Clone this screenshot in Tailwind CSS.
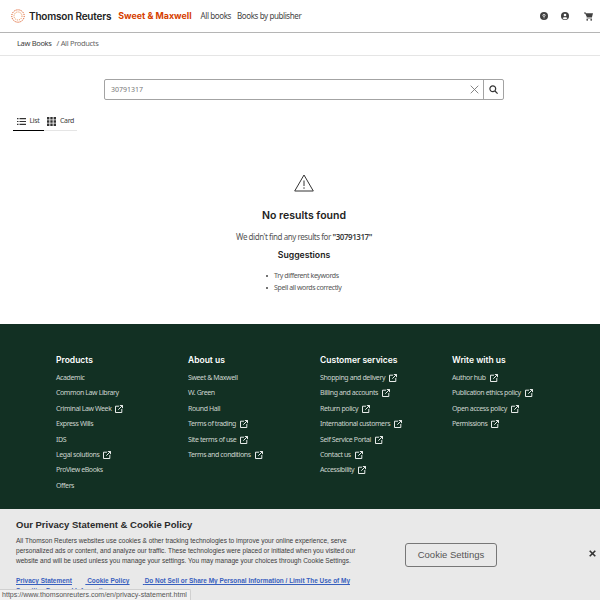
<!DOCTYPE html>
<html lang="en">
<head>
    <meta charset="UTF-8">
    <title>All Products | Sweet &amp; Maxwell</title>
    <script src="https://cdn.jsdelivr.net/npm/@tailwindcss/browser@4"></script>
</head>
<body class="relative h-[600px] w-[600px] overflow-hidden bg-white font-['Noto_Sans',sans-serif] text-[#404040]">
    <!-- Header -->
    <header class="flex h-[33px] items-center border-b border-[#b5b5b5] pl-[11px] pr-[7px]">
        <svg width="14" height="14" viewBox="0 0 14 14" fill="none" class="mr-[4px]">
            <circle cx="7" cy="7" r="6.2" stroke="#d64000" stroke-width="1" stroke-dasharray="1 1"/>
            <circle cx="7" cy="7" r="4" stroke="#e98a4a" stroke-width="1" stroke-dasharray="1 1"/>
        </svg>
        <span class="font-['Inter',sans-serif] text-[10px] font-semibold tracking-[-0.2px] text-[#222]">Thomson Reuters</span>
        <span class="ml-[7px] font-['Inter',sans-serif] text-[8.9px] font-bold text-[#d64000]">Sweet &amp; Maxwell</span>
        <a class="ml-[9px] text-[8px] tracking-[-0.4px] text-[#444]">All books</a>
        <a class="ml-[6px] text-[8px] tracking-[-0.4px] text-[#444]">Books by publisher</a>
        <div class="ml-auto flex items-center">
            <svg width="8" height="8" viewBox="0 0 8 8"><circle cx="4" cy="4" r="4" fill="#404040"/><circle cx="4" cy="3.4" r="1.1" fill="none" stroke="#fff" stroke-width=".8"/><rect x="3.6" y="5.4" width=".9" height=".9" fill="#fff"/></svg>
            <svg width="8" height="8" viewBox="0 0 8 8" class="ml-[13px]"><circle cx="4" cy="4" r="4" fill="#404040"/><circle cx="4" cy="3" r="1.3" fill="#fff"/><path d="M1.6 6.3C2.2 5 5.8 5 6.4 6.3L5 7.2H3Z" fill="#fff"/></svg>
            <svg width="9" height="9" viewBox="0 0 9 9" fill="#404040" class="ml-[15px]"><path d="M0 .5H1.8L2.1 1.3H9L8 5H2.8L1.2 1.4H0Z"/><path d="M2.6 5.5H8V6.4H2.6Z"/><circle cx="3.2" cy="7.8" r=".9"/><circle cx="7.2" cy="7.8" r=".9"/></svg>
        </div>
    </header>

    <!-- Breadcrumb -->
    <nav class="flex h-[23px] items-center border-b border-[#e5e5e5] pl-[17px] text-[7.5px] tracking-[-0.33px]">
        <a class="text-[#404040]">Law Books</a>
        <span class="ml-[5px] text-[#666]">/ All Products</span>
    </nav>

    <!-- Search -->
    <div class="ml-[104px] mt-[23px] flex h-[21px] w-[400px] rounded-[2px] border border-[#a3a3a3]">
        <div class="flex flex-1 items-center justify-between pl-[6px] pr-[4px]">
            <span class="pt-px text-[7px] text-[#777]">30791317</span>
            <svg width="9" height="9" viewBox="0 0 9 9" stroke="#777" stroke-width=".9"><path d="M.7.7 8.3 8.3M8.3.7.7 8.3"/></svg>
        </div>
        <div class="flex w-[20px] items-center justify-center border-l border-[#a3a3a3]">
            <svg width="9" height="9" viewBox="0 0 9 9" fill="none" stroke="#333" stroke-width="1.2"><circle cx="3.8" cy="3.8" r="2.9"/><path d="M6 6 8.6 8.6"/></svg>
        </div>
    </div>

    <!-- View tabs -->
    <div class="ml-[13px] mt-[11px] flex h-[20px] w-[64px] border-b border-[#e5e5e5] pt-[2px] text-[7px] tracking-[-0.3px]">
        <div class="-mb-px flex w-[31px] items-center justify-center gap-[3px] border-b-[1.5px] border-black">
            <svg width="9" height="7" viewBox="0 0 9 7" fill="#333"><path d="M0 0H1.5V1.2H0ZM2.5 0H9V1.2H2.5ZM0 2.9H1.5V4.1H0ZM2.5 2.9H9V4.1H2.5ZM0 5.8H1.5V7H0ZM2.5 5.8H9V7H2.5Z"/></svg>
            <span>List</span>
        </div>
        <div class="flex flex-1 items-center justify-center gap-[4px]">
            <svg width="9" height="9" viewBox="0 0 9 9" fill="#333"><path d="M0 0H2.4V2.4H0ZM3.3 0H5.7V2.4H3.3ZM6.6 0H9V2.4H6.6ZM0 3.3H2.4V5.7H0ZM3.3 3.3H5.7V5.7H3.3ZM6.6 3.3H9V5.7H6.6ZM0 6.6H2.4V9H0ZM3.3 6.6H5.7V9H3.3ZM6.6 6.6H9V9H6.6Z"/></svg>
            <span>Card</span>
        </div>
    </div>

    <!-- Empty state -->
    <main class="ml-[4px] mt-[43px] flex h-[150px] w-[600px] flex-col items-center">
        <svg width="20" height="18" viewBox="0 0 20 18" fill="none" stroke="#333" stroke-width="1"><path d="M10 1 19.3 17H.7Z" stroke-linejoin="round"/><path d="M10 6.5V12M10 13.3V14.8"/></svg>
        <h1 class="mt-[17px] font-['Inter',sans-serif] text-[10.5px] leading-[14px] font-semibold text-[#222]">No results found</h1>
        <p class="mt-[8px] text-[8px] leading-[12px] tracking-[-0.44px] text-[#555]">We didn't find any results for <b class="font-semibold text-[#404040]">"30791317"</b></p>
        <h2 class="mt-[6px] font-['Inter',sans-serif] text-[8.7px] leading-[12px] font-semibold text-[#222]">Suggestions</h2>
        <ul class="mt-[9px] -ml-px text-[7px] leading-[12px] tracking-[-0.4px] text-[#555]">
            <li class="flex items-center gap-[6px]"><span class="h-[2.5px] w-[2.5px] rounded-full bg-[#444]"></span>Try different keywords</li>
            <li class="flex items-center gap-[6px]"><span class="h-[2.5px] w-[2.5px] rounded-full bg-[#444]"></span>Spell all words correctly</li>
        </ul>
    </main>

    <!-- Footer -->
    <footer class="h-[276px] bg-[#123023] pl-[56px] pt-[30px] text-[#cdd5cf]">
        <div class="grid w-[528px] grid-cols-4 text-[7px] tracking-[-0.4px]">
            <div>
                <h3 class="mb-[6px] font-['Inter',sans-serif] text-[8.5px] leading-[12px] font-semibold tracking-normal text-white">Products</h3>
                <ul class="flex flex-col gap-[3.4px] leading-[12px]">
                    <li>Academic</li>
                    <li>Common Law Library</li>
                    <li class="flex items-center gap-[4px]">Criminal Law Week <svg width="8" height="8" viewBox="0 0 8 8" fill="none" stroke="#fff" stroke-width=".9"><path d="M4 1.2H.5V7.5H6.8V4M3.3 4.7 7.5.5M4.8.5H7.5V3.2"/></svg></li>
                    <li>Express Wills</li>
                    <li>IDS</li>
                    <li class="flex items-center gap-[4px]">Legal solutions <svg width="8" height="8" viewBox="0 0 8 8" fill="none" stroke="#fff" stroke-width=".9"><path d="M4 1.2H.5V7.5H6.8V4M3.3 4.7 7.5.5M4.8.5H7.5V3.2"/></svg></li>
                    <li>ProView eBooks</li>
                    <li>Offers</li>
                </ul>
            </div>
            <div>
                <h3 class="mb-[6px] font-['Inter',sans-serif] text-[8.5px] leading-[12px] font-semibold tracking-normal text-white">About us</h3>
                <ul class="flex flex-col gap-[3.4px] leading-[12px]">
                    <li>Sweet &amp; Maxwell</li>
                    <li>W. Green</li>
                    <li>Round Hall</li>
                    <li class="flex items-center gap-[4px]">Terms of trading <svg width="8" height="8" viewBox="0 0 8 8" fill="none" stroke="#fff" stroke-width=".9"><path d="M4 1.2H.5V7.5H6.8V4M3.3 4.7 7.5.5M4.8.5H7.5V3.2"/></svg></li>
                    <li class="flex items-center gap-[4px]">Site terms of use <svg width="8" height="8" viewBox="0 0 8 8" fill="none" stroke="#fff" stroke-width=".9"><path d="M4 1.2H.5V7.5H6.8V4M3.3 4.7 7.5.5M4.8.5H7.5V3.2"/></svg></li>
                    <li class="flex items-center gap-[4px]">Terms and conditions <svg width="8" height="8" viewBox="0 0 8 8" fill="none" stroke="#fff" stroke-width=".9"><path d="M4 1.2H.5V7.5H6.8V4M3.3 4.7 7.5.5M4.8.5H7.5V3.2"/></svg></li>
                </ul>
            </div>
            <div>
                <h3 class="mb-[6px] font-['Inter',sans-serif] text-[8.5px] leading-[12px] font-semibold tracking-normal text-white">Customer services</h3>
                <ul class="flex flex-col gap-[3.4px] leading-[12px]">
                    <li class="flex items-center gap-[4px]">Shopping and delivery <svg width="8" height="8" viewBox="0 0 8 8" fill="none" stroke="#fff" stroke-width=".9"><path d="M4 1.2H.5V7.5H6.8V4M3.3 4.7 7.5.5M4.8.5H7.5V3.2"/></svg></li>
                    <li class="flex items-center gap-[4px]">Billing and accounts <svg width="8" height="8" viewBox="0 0 8 8" fill="none" stroke="#fff" stroke-width=".9"><path d="M4 1.2H.5V7.5H6.8V4M3.3 4.7 7.5.5M4.8.5H7.5V3.2"/></svg></li>
                    <li class="flex items-center gap-[4px]">Return policy <svg width="8" height="8" viewBox="0 0 8 8" fill="none" stroke="#fff" stroke-width=".9"><path d="M4 1.2H.5V7.5H6.8V4M3.3 4.7 7.5.5M4.8.5H7.5V3.2"/></svg></li>
                    <li class="flex items-center gap-[4px]">International customers <svg width="8" height="8" viewBox="0 0 8 8" fill="none" stroke="#fff" stroke-width=".9"><path d="M4 1.2H.5V7.5H6.8V4M3.3 4.7 7.5.5M4.8.5H7.5V3.2"/></svg></li>
                    <li class="flex items-center gap-[4px]">Self Service Portal <svg width="8" height="8" viewBox="0 0 8 8" fill="none" stroke="#fff" stroke-width=".9"><path d="M4 1.2H.5V7.5H6.8V4M3.3 4.7 7.5.5M4.8.5H7.5V3.2"/></svg></li>
                    <li class="flex items-center gap-[4px]">Contact us <svg width="8" height="8" viewBox="0 0 8 8" fill="none" stroke="#fff" stroke-width=".9"><path d="M4 1.2H.5V7.5H6.8V4M3.3 4.7 7.5.5M4.8.5H7.5V3.2"/></svg></li>
                    <li class="flex items-center gap-[4px]">Accessibility <svg width="8" height="8" viewBox="0 0 8 8" fill="none" stroke="#fff" stroke-width=".9"><path d="M4 1.2H.5V7.5H6.8V4M3.3 4.7 7.5.5M4.8.5H7.5V3.2"/></svg></li>
                </ul>
            </div>
            <div>
                <h3 class="mb-[6px] font-['Inter',sans-serif] text-[8.5px] leading-[12px] font-semibold tracking-normal text-white">Write with us</h3>
                <ul class="flex flex-col gap-[3.4px] leading-[12px]">
                    <li class="flex items-center gap-[4px]">Author hub <svg width="8" height="8" viewBox="0 0 8 8" fill="none" stroke="#fff" stroke-width=".9"><path d="M4 1.2H.5V7.5H6.8V4M3.3 4.7 7.5.5M4.8.5H7.5V3.2"/></svg></li>
                    <li class="flex items-center gap-[4px]">Publication ethics policy <svg width="8" height="8" viewBox="0 0 8 8" fill="none" stroke="#fff" stroke-width=".9"><path d="M4 1.2H.5V7.5H6.8V4M3.3 4.7 7.5.5M4.8.5H7.5V3.2"/></svg></li>
                    <li class="flex items-center gap-[4px]">Open access policy <svg width="8" height="8" viewBox="0 0 8 8" fill="none" stroke="#fff" stroke-width=".9"><path d="M4 1.2H.5V7.5H6.8V4M3.3 4.7 7.5.5M4.8.5H7.5V3.2"/></svg></li>
                    <li class="flex items-center gap-[4px]">Permissions <svg width="8" height="8" viewBox="0 0 8 8" fill="none" stroke="#fff" stroke-width=".9"><path d="M4 1.2H.5V7.5H6.8V4M3.3 4.7 7.5.5M4.8.5H7.5V3.2"/></svg></li>
                </ul>
            </div>
        </div>
    </footer>

    <!-- Cookie banner overlay -->
    <div class="absolute bottom-0 left-0 flex h-[91px] w-[600px] overflow-hidden bg-[#e9e9e9] pl-[16px] font-['Liberation_Sans',sans-serif]">
        <div class="w-[345px] shrink-0 pt-[10px]">
            <h2 class="text-[9.5px] leading-[12px] font-bold text-[#2b2b2b]">Our Privacy Statement &amp; Cookie Policy</h2>
            <p class="mt-[5px] text-[6.55px] leading-[10px] text-[#3c3c3c]">All Thomson Reuters websites use cookies &amp; other tracking technologies to improve your online experience, serve personalized ads or content, and analyze our traffic. These technologies were placed or initiated when you visited our website and will be used unless you manage your settings. You may manage your choices through Cookie Settings.</p>
            <p class="mt-[10px] text-[6.45px] leading-[10px] font-bold text-[#3860be] underline"><a class="mr-[13.5px]">Privacy Statement</a> <a class="mr-[13.5px]">Cookie Policy</a> <a>Do Not Sell or Share My Personal Information / Limit The Use of My Sensitive Personal Information</a></p>
        </div>
        <button class="ml-[44px] mt-[34px] h-[24px] w-[92px] rounded-[3px] border border-[#777] text-[9.5px] text-[#555]">Cookie Settings</button>
        <svg width="7" height="7" viewBox="0 0 7 7" stroke="#333" stroke-width="1.6" class="ml-[92px] mt-[41px]"><path d="M.7.7 6.3 6.3M6.3.7.7 6.3"/></svg>
    </div>

    <!-- Browser status bubble -->
    <div class="absolute bottom-0 left-0 flex h-[11px] w-[191px] items-center rounded-tr-[2px] border-t border-r border-[#d0d0d0] bg-[#f1f1f1] pl-[2px] font-['Liberation_Sans',sans-serif] text-[7.05px] text-[#555]">https://www.thomsonreuters.com/en/privacy-statement.html</div>
</body>
</html>
